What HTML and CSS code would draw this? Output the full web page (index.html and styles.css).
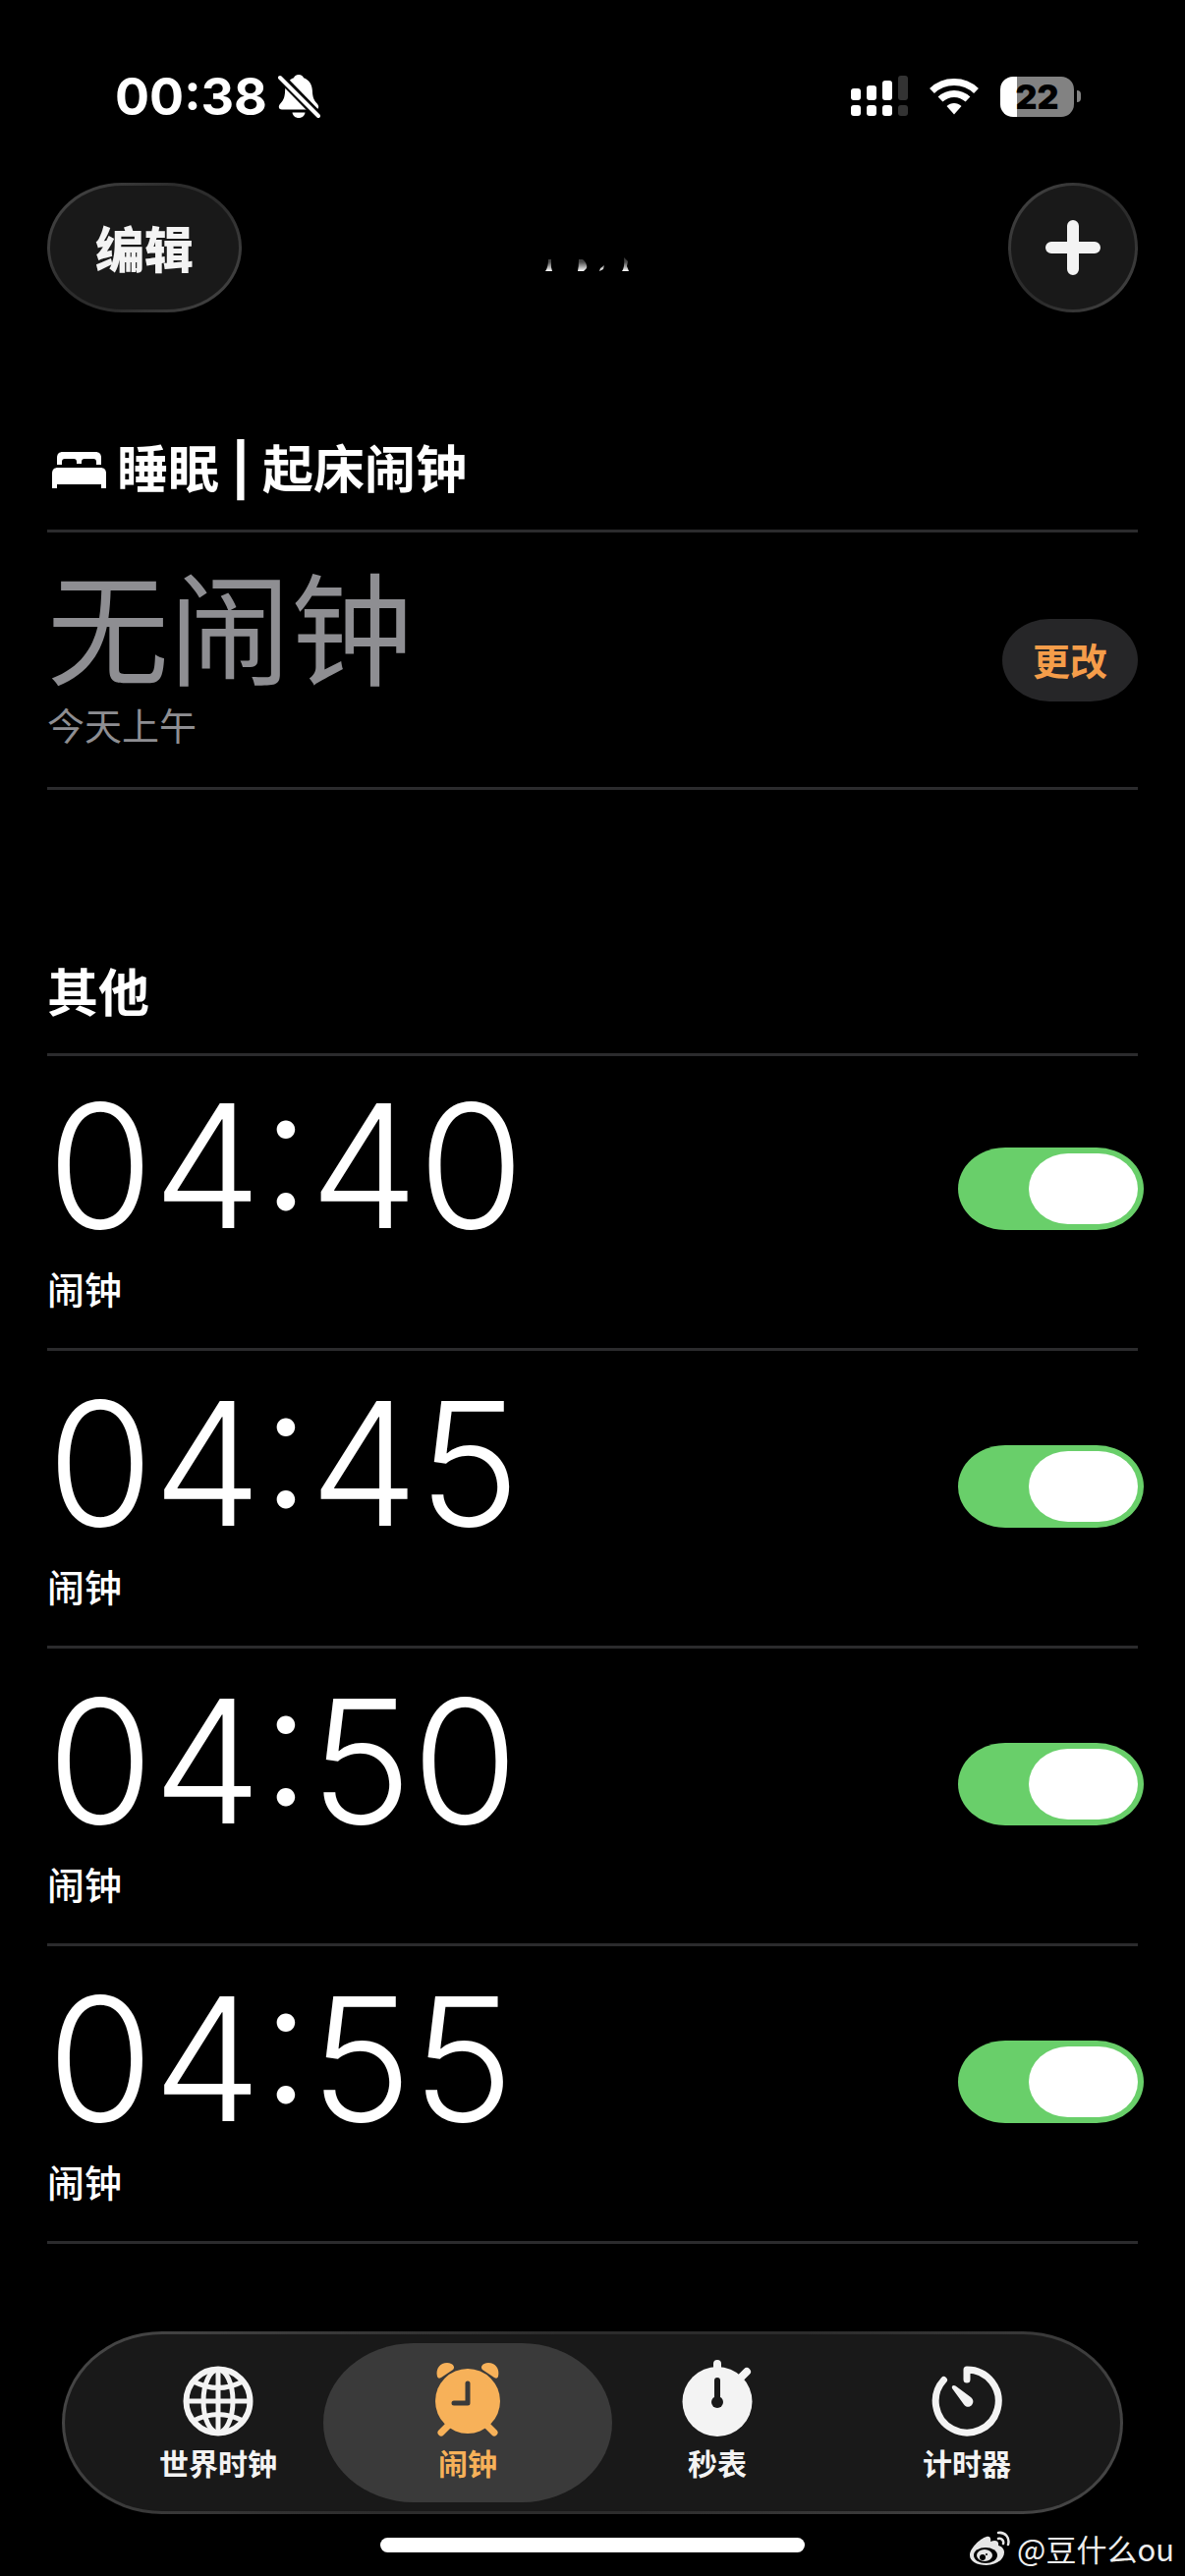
FILE: index.html
```html
<!DOCTYPE html>
<html lang="zh-CN">
<head>
    <meta charset="UTF-8">
    <meta name="viewport" content="width=device-width, initial-scale=1.0">
    <title>闹钟</title>
    <link rel="stylesheet" href="styles.css">
</head>
<body>
    <div class="status-bar">
        <div class="status-left">
            <span class="status-time">00:38</span>
            <svg class="icon-bell" width="44" height="46" viewBox="0 0 44 46" aria-hidden="true">
                <path fill="#fff" d="M22 1c2.600 0 4.500 1.400 5 3.300 5.400 1.900 8.600 6.700 8.900 13 .2 6 1.200 9.500 4.400 12.700 1.300 1.400 1.900 2.600 1.900 3.800 0 1.800-1.200 2.700-3.100 2.700H4.900C3 36.500 1.800 35.600 1.800 33.800c0-1.200.6-2.400 1.900-3.800C6.900 26.800 7.900 23.300 8.100 17.300 8.400 11 11.600 6.200 17 4.300 17.500 2.400 19.400 1 22 1z"/>
                <path fill="#fff" d="M15.500 39.500h13c-.5 3.300-3 5.500-6.500 5.500s-6-2.200-6.500-5.500z"/>
                <path stroke="#000" stroke-width="9" d="M1 1l42 43"/>
                <path stroke="#fff" stroke-width="4" stroke-linecap="round" d="M3 4l39 39"/>
            </svg>
        </div>
        <div class="status-right">
            <svg width="58" height="42" viewBox="0 0 58 42" fill="#fff" aria-hidden="true">
                <rect x="0" y="13" width="10" height="12" rx="3"/>
                <rect x="16" y="10" width="10" height="15" rx="3"/>
                <rect x="32" y="5" width="10" height="20" rx="3"/>
                <rect x="48" y="0" width="10" height="25" rx="3" fill="#333"/>
                <rect x="0" y="30" width="10" height="11" rx="3"/>
                <rect x="16" y="30" width="10" height="11" rx="3"/>
                <rect x="32" y="30" width="10" height="11" rx="3"/>
                <rect x="48" y="30" width="10" height="11" rx="3" fill="#333"/>
            </svg>
            <svg width="50" height="38" viewBox="0 0 50 38" aria-hidden="true">
                <g fill="none" stroke="#fff" stroke-width="7">
                    <path d="M2.500 13.500C15 1.500 35 1.500 47.500 13.500"/>
                    <path d="M11 22C19 14.500 31 14.500 39 22"/>
                </g>
                <path fill="#fff" d="M17.500 29c4.300-3.900 10.700-3.900 15 0L25 37.500z"/>
            </svg>
            <div class="battery"><span class="battery-level">22</span></div>
        </div>
    </div>

    <header class="toolbar">
        <button class="glass edit-button" type="button">编辑</button>
        <!-- title strokes still fading in under the bar -->
        <svg class="title-fade" width="110" height="50" viewBox="0 0 110 50" aria-hidden="true">
            <defs>
                <linearGradient id="fade" x1="0" y1="26" x2="0" y2="49" gradientUnits="userSpaceOnUse">
                    <stop offset="0" stop-color="#fff" stop-opacity="0"/>
                    <stop offset=".6" stop-color="#fff" stop-opacity=".3"/>
                    <stop offset="1" stop-color="#fff"/>
                </linearGradient>
            </defs>
            <path fill="url(#fade)" d="M7 49q3-4 3-12h3v8l1 4zM40 49q1-5 1-12h4q5 4 4 9l-3 3zM62 49l1-3 4-3-1 4zM85 49q3-4 2-14l4 4-1 5 2 5z"/>
        </svg>
        <button class="glass add-button" type="button" aria-label="添加闹钟">
            <svg width="58" height="58" viewBox="0 0 58 58" aria-hidden="true">
                <path stroke="#f3f3f3" stroke-width="12" stroke-linecap="round" d="M29 7v44M7 29h44"/>
            </svg>
        </button>
    </header>

    <main>
        <section class="sleep">
            <h2 class="section-title">
                <svg width="56" height="38" viewBox="0 0 56 38" fill="#fff" aria-hidden="true">
                    <path d="M5 13V6c0-4 2-6 6-6h33c4 0 6 2 6 6v7h-5v-3c0-2-1-3-3-3H33c-2 0-3 1-3 3v2h-5v-2c0-2-1-3-3-3H13c-2 0-3 1-3 3v3z"/>
                    <path d="M0 37V22c0-4 2-6 6-6h43c4 0 6 2 6 6v15h-5v-4H5v4z"/>
                </svg>
                睡眠 | 起床闹钟
            </h2>
            <div class="sleep-row">
                <div class="sleep-text">
                    <p class="sleep-time">无闹钟</p>
                    <p class="alarm-label">今天上午</p>
                </div>
                <button class="change-button" type="button">更改</button>
            </div>
        </section>

        <section class="others">
            <h2 class="section-title">其他</h2>
            <ul class="alarm-list">
                <li class="alarm-row">
                    <label for="alarm-1">
                        <span class="alarm-time">04:40</span>
                        <span class="alarm-label">闹钟</span>
                    </label>
                    <input class="toggle" id="alarm-1" type="checkbox" role="switch" checked>
                </li>
                <li class="alarm-row">
                    <label for="alarm-2">
                        <span class="alarm-time">04:45</span>
                        <span class="alarm-label">闹钟</span>
                    </label>
                    <input class="toggle" id="alarm-2" type="checkbox" role="switch" checked>
                </li>
                <li class="alarm-row">
                    <label for="alarm-3">
                        <span class="alarm-time">04:50</span>
                        <span class="alarm-label">闹钟</span>
                    </label>
                    <input class="toggle" id="alarm-3" type="checkbox" role="switch" checked>
                </li>
                <li class="alarm-row">
                    <label for="alarm-4">
                        <span class="alarm-time">04:55</span>
                        <span class="alarm-label">闹钟</span>
                    </label>
                    <input class="toggle" id="alarm-4" type="checkbox" role="switch" checked>
                </li>
            </ul>
        </section>
    </main>

    <footer class="bottom">
        <nav class="glass tab-bar">
            <a class="tab" href="#world">
                <svg width="80" height="80" viewBox="0 0 80 80" fill="none" stroke="#f3f3f3" stroke-width="5" aria-hidden="true">
                    <circle cx="40" cy="40" r="32.500" stroke-width="6"/>
                    <ellipse cx="40" cy="40" rx="15" ry="32"/>
                    <path d="M40 6v68M6 40h68M15 20q25 13 50 0M15 60q25-13 50 0"/>
                </svg>
                <span>世界时钟</span>
            </a>
            <a class="tab active" href="#alarm" aria-current="page">
                <svg width="80" height="80" viewBox="0 0 80 80" fill="#f7b159" aria-hidden="true">
                    <circle cx="40" cy="40" r="33"/>
                    <path d="M9 15C7 7 12 1 19 1c3 0 6 1 7 4 0 1 0 2-1 3L13 16c-2 1-3 1-4-1zM71 15C73 7 68 1 61 1c-3 0-6 1-7 4 0 1 0 2 1 3l12 8c2 1 3 1 4-1z"/>
                    <path stroke="#f7b159" stroke-width="7" stroke-linecap="round" d="M20 65l-7 7M60 65l7 7"/>
                    <path fill="none" stroke="#3a3a3a" stroke-width="5" stroke-linecap="round" stroke-linejoin="round" d="M40 22v20H26"/>
                </svg>
                <span>闹钟</span>
            </a>
            <a class="tab" href="#stopwatch">
                <svg width="80" height="80" viewBox="0 0 80 80" fill="#f3f3f3" overflow="visible" aria-hidden="true">
                    <circle cx="40" cy="40.500" r="35.500"/>
                    <path stroke="#f3f3f3" stroke-width="8" stroke-linecap="round" d="M40 2v10M64 16l6-6"/>
                    <path stroke="#191919" stroke-width="6" stroke-linecap="round" d="M40 19v18"/>
                    <circle cx="40" cy="41" r="6" fill="#191919"/>
                </svg>
                <span>秒表</span>
            </a>
            <a class="tab" href="#timer">
                <svg width="80" height="80" viewBox="0 0 80 80" fill="none" stroke="#f3f3f3" stroke-width="7" stroke-linecap="round" stroke-linejoin="round" aria-hidden="true">
                    <path d="M40 18V8A32 32 0 1 1 16.500 18.500"/>
                    <path fill="#f3f3f3" stroke="none" d="M28.500 24.500l15.500 11.500c3 2.500 3 5.500 1 8s-6 2.500-8-.5L25 27c-1-2.500 1.500-4 3.500-2.500z"/>
                </svg>
                <span>计时器</span>
            </a>
        </nav>
        <div class="home-indicator"></div>
        <div class="watermark">
            <svg width="42" height="36" viewBox="0 0 42 36" aria-hidden="true">
                <path fill="#e6e6e6" d="M17 6c3-1 5 1 4 5 5-2 9-1 8 4 4 1 6 4 6 7 0 7-8 13-18 13C7 35 0 31 0 25 0 18 10 8 17 6z"/>
                <ellipse cx="16" cy="25" rx="12" ry="8" fill="#000"/>
                <ellipse cx="15" cy="25" rx="8" ry="6" fill="#e6e6e6"/>
                <circle cx="13" cy="27" r="3" fill="#000"/>
                <circle cx="17" cy="24" r="1" fill="#000"/>
                <path fill="none" stroke="#e6e6e6" stroke-width="2.500" stroke-linecap="round" d="M29 2c7-1 12 5 10 12M29 8c3-1 6 2 5 5"/>
            </svg>
            <span>@豆什么ou</span>
        </div>
    </footer>
</body>
</html>
```

FILE: styles.css
```css
* {
    box-sizing: border-box;
}

body {
    font-family: Inter, "Noto Sans CJK SC", sans-serif;
    background-color: #000;
    color: #fff;
    display: flex;
    flex-direction: column;
    min-height: 100vh;
    margin: 0;
}

h2, p, ul {
    margin: 0;
    padding: 0;
}

button {
    font-family: inherit;
    cursor: pointer;
}

svg {
    display: block;
    flex-shrink: 0;
}

.status-bar {
    display: flex;
    justify-content: space-between;
    align-items: center;
    height: 150px;
    padding: 46px 106px 0 117px;
}

.status-left {
    display: flex;
    align-items: center;
    gap: 10px;
}

.status-time {
    font-size: 52px;
    font-weight: 700;
}

.status-right {
    display: flex;
    align-items: center;
    gap: 22px;
}

.battery {
    position: relative;
    width: 75px;
    height: 41px;
    margin-right: 7px;
    border-radius: 13px;
    background: linear-gradient(to right, #fff 17px, #828282 17px);
    text-align: center;
}

.battery::after {
    content: "";
    position: absolute;
    right: -7px;
    top: 14px;
    width: 4px;
    height: 12px;
    border-radius: 0 4px 4px 0;
    background-color: #828282;
}

.battery-level {
    display: block;
    color: #000;
    font-size: 34px;
    font-weight: 900;
    line-height: 41px;
}

.toolbar {
    display: grid;
    grid-template-columns: 1fr auto 1fr;
    align-items: center;
    margin-top: 36px;
    padding: 0 48px;
}

.glass {
    border: 3px solid transparent;
    background:
        linear-gradient(#191919, #191919) padding-box,
        linear-gradient(135deg, #484848, #2c2c2c 40%, #2c2c2c 60%, #484848) border-box;
}

.edit-button {
    width: 198px;
    height: 132px;
    padding: 0 0 2px;
    border-radius: 76px / 66px;
    color: #f3f3f3;
    font-size: 50px;
    font-weight: 800;
}

.add-button {
    display: flex;
    align-items: center;
    justify-content: center;
    justify-self: end;
    width: 132px;
    height: 132px;
    padding: 0;
    border-radius: 50%;
}

main {
    padding: 0 48px;
}

.section-title {
    display: flex;
    align-items: center;
    gap: 10px;
    border-bottom: 3px solid #2b2b2d;
    font-size: 52px;
    font-weight: 700;
    line-height: 76px;
}

.sleep .section-title {
    margin-top: 123px;
    padding: 0 5px 22px;
}

.sleep-row {
    display: flex;
    justify-content: space-between;
    align-items: center;
    height: 262px;
    border-bottom: 3px solid #2b2b2d;
    color: #8e8e92;
}

.sleep-text {
    padding-bottom: 10px;
}

.sleep-time {
    font-size: 124px;
    line-height: 144px;
}

.alarm-label {
    display: block;
    font-size: 38px;
    line-height: 48px;
}

.change-button {
    width: 138px;
    height: 84px;
    padding: 0 0 2px;
    border: none;
    border-radius: 48px / 42px;
    background-color: #262628;
    color: #f59d4a;
    font-size: 38px;
    font-weight: 700;
}

.others .section-title {
    margin-top: 170px;
    padding-bottom: 22px;
}

.alarm-list {
    margin-top: -3px;
    list-style: none;
}

.alarm-row {
    display: flex;
    justify-content: space-between;
    align-items: center;
    height: 303px;
    padding-bottom: 24px;
    border-bottom: 3px solid #2b2b2d;
}

.alarm-row .alarm-label {
    font-weight: 500;
}

.alarm-time {
    display: block;
    font-size: 175px;
    font-weight: 300;
    line-height: 206px;
}

.toggle {
    appearance: none;
    display: flex;
    justify-content: flex-start;
    width: 189px;
    height: 84px;
    margin: 0 -6px 0 0;
    padding: 6px;
    border-radius: 48px / 42px;
    background-color: #39393d;
    cursor: pointer;
}

.toggle::before {
    content: "";
    width: 111px;
    border-radius: 40px / 36px;
    background-color: #fff;
}

.toggle:checked {
    justify-content: flex-end;
    background-color: #69cf6a;
}

.bottom {
    position: relative;
    margin-top: auto;
    padding: 0 63px 24px;
}

.tab-bar {
    display: flex;
    height: 186px;
    padding: 9px 29px;
    border-radius: 102px / 93px;
}

.tab {
    display: flex;
    flex: 1 1 0;
    flex-direction: column;
    align-items: center;
    gap: 2px;
    margin: 0 -20px;
    padding-top: 19px;
    border-radius: 92px / 81px;
    color: #f3f3f3;
    font-size: 30px;
    font-weight: 600;
    line-height: 44px;
    text-decoration: none;
}

.tab.active {
    background-color: #3a3a3a;
    color: #f7b159;
}

.home-indicator {
    width: 40%;
    height: 15px;
    margin: 24px auto 0;
    border-radius: 8px;
    background-color: #fff;
}

.watermark {
    position: absolute;
    right: 11px;
    bottom: 6px;
    display: flex;
    align-items: center;
    gap: 6px;
    color: #eee;
    font-family: "Noto Sans CJK SC", sans-serif;
    font-size: 31px;
    line-height: 44px;
}
```
